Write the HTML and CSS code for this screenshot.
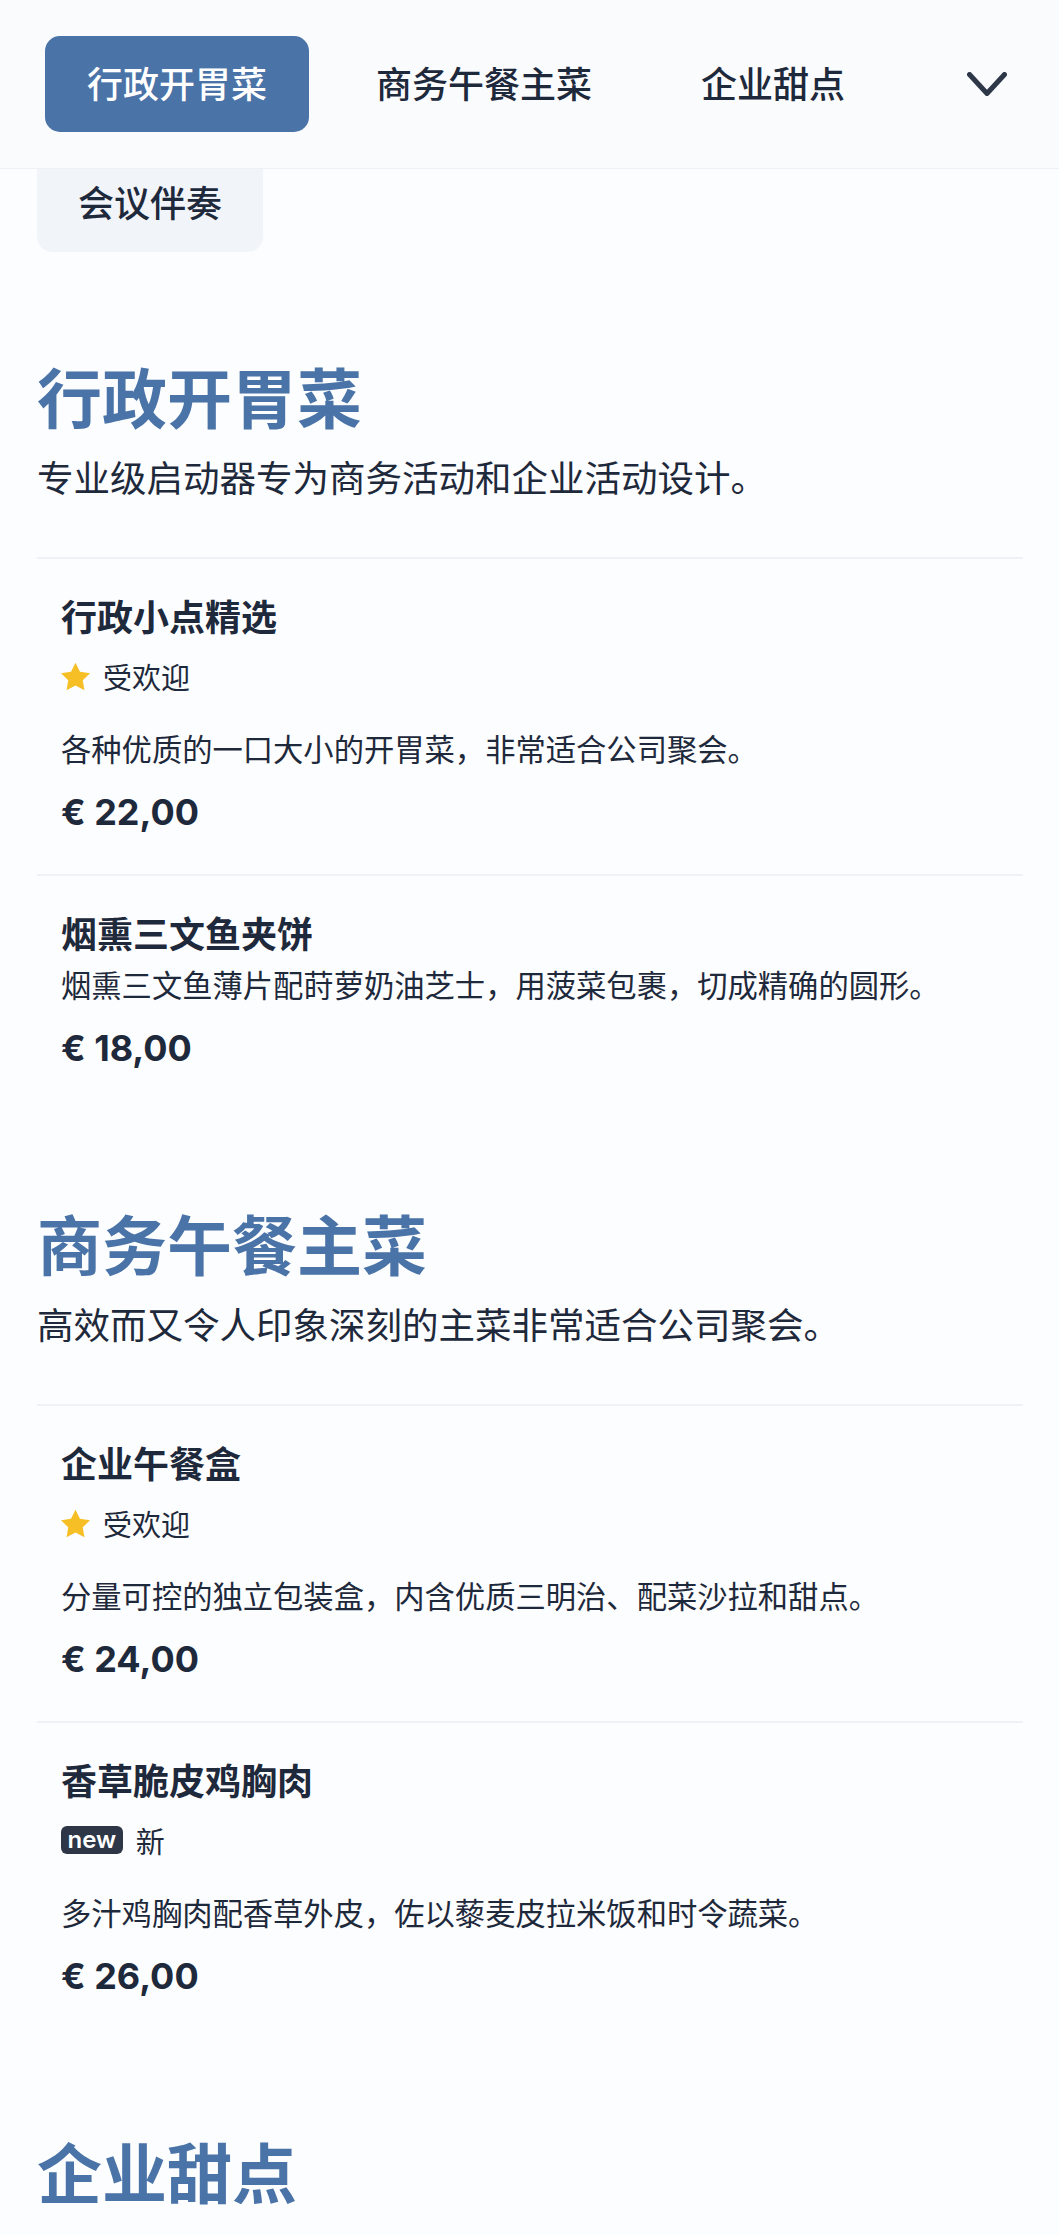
FILE: index.html
```html
<!DOCTYPE html>
<html lang="zh-CN">
<head>
    <meta charset="utf-8">
    <title>企业餐饮菜单</title>
    <link rel="stylesheet" href="styles.css">
</head>
<body>
    <header class="topbar">
        <nav class="tabs">
            <a class="tab active" href="#starters">行政开胃菜</a>
            <a class="tab" href="#mains">商务午餐主菜</a>
            <a class="tab" href="#desserts">企业甜点</a>
        </nav>
        <button class="more" aria-label="更多分类">
            <svg width="40" height="24" viewBox="0 0 40 24">
                <polyline points="2.5,2.5 20,21.5 37.5,2.5" fill="none" stroke="#2d3748" stroke-width="5" stroke-linecap="round" stroke-linejoin="round"/>
            </svg>
        </button>
    </header>

    <div class="tabs-extra">
        <a class="tab-peek" href="#music">会议伴奏</a>
    </div>

    <main class="menu">
        <section class="menu-section" id="starters">
            <h2>行政开胃菜</h2>
            <p class="section-desc">专业级启动器专为商务活动和企业活动设计。</p>
            <ul class="items">
                <li class="item">
                    <h3 class="item-name">行政小点精选</h3>
                    <div class="item-tag">
                        <svg class="star" width="29" height="29" viewBox="2 1.5 20 20">
                            <path d="M12 2l3.09 6.26L22 9.27l-5 4.87 1.18 6.88L12 17.77l-6.18 3.25L7 14.14 2 9.27l6.91-1.01L12 2z" fill="#f6bf26"/>
                        </svg>
                        <span>受欢迎</span>
                    </div>
                    <p class="item-desc">各种优质的一口大小的开胃菜，非常适合公司聚会。</p>
                    <div class="price">€ 22,00</div>
                </li>
                <li class="item">
                    <h3 class="item-name">烟熏三文鱼夹饼</h3>
                    <p class="item-desc">烟熏三文鱼薄片配莳萝奶油芝士，用菠菜包裹，切成精确的圆形。</p>
                    <div class="price">€ 18,00</div>
                </li>
            </ul>
        </section>

        <section class="menu-section" id="mains">
            <h2>商务午餐主菜</h2>
            <p class="section-desc">高效而又令人印象深刻的主菜非常适合公司聚会。</p>
            <ul class="items">
                <li class="item">
                    <h3 class="item-name">企业午餐盒</h3>
                    <div class="item-tag">
                        <svg class="star" width="29" height="29" viewBox="2 1.5 20 20">
                            <path d="M12 2l3.09 6.26L22 9.27l-5 4.87 1.18 6.88L12 17.77l-6.18 3.25L7 14.14 2 9.27l6.91-1.01L12 2z" fill="#f6bf26"/>
                        </svg>
                        <span>受欢迎</span>
                    </div>
                    <p class="item-desc">分量可控的独立包装盒，内含优质三明治、配菜沙拉和甜点。</p>
                    <div class="price">€ 24,00</div>
                </li>
                <li class="item">
                    <h3 class="item-name">香草脆皮鸡胸肉</h3>
                    <div class="item-tag">
                        <span class="badge">new</span>
                        <span>新</span>
                    </div>
                    <p class="item-desc">多汁鸡胸肉配香草外皮，佐以藜麦皮拉米饭和时令蔬菜。</p>
                    <div class="price">€ 26,00</div>
                </li>
            </ul>
        </section>

        <section class="menu-section" id="desserts">
            <h2>企业甜点</h2>
        </section>
    </main>
</body>
</html>
```

FILE: styles.css
```css
* {
    margin: 0;
    padding: 0;
    box-sizing: border-box;
}

body {
    background: #fcfdfe;
    color: #1e293b;
    font-family: "Noto Sans CJK SC", "Inter", sans-serif;
}

a {
    text-decoration: none;
    color: inherit;
}

/* top navigation */
.topbar {
    height: 169px;
    display: flex;
    align-items: center;
    padding: 0 52px 0 45px;
    background: #f9fbfd;
    border-bottom: 1px solid #edf1f5;
}

.tabs {
    flex: 1;
    display: flex;
    gap: 25px;
}

.tab {
    display: block;
    padding: 0 42px 4px;
    line-height: 92px;
    font-size: 36px;
    font-weight: 500;
    border-radius: 15px;
    color: #1e293b;
    white-space: nowrap;
}

.tab.active {
    background: #4a73a7;
    color: #fff;
}

.more {
    width: 40px;
    height: 24px;
    border: none;
    background: none;
    cursor: pointer;
}

.more svg {
    display: block;
}

.tabs-extra {
    display: flex;
    padding-left: 37px;
}

.tab-peek {
    display: block;
    height: 83px;
    padding: 0 41px;
    line-height: 65px;
    font-size: 36px;
    font-weight: 500;
    background: #f1f5f9;
    border-radius: 0 0 15px 15px;
}

/* menu */
.menu {
    padding: 11px 36px 0 37px;
}

.menu-section {
    padding-top: 92px;
}

.menu-section h2 {
    font-size: 65px;
    line-height: 80px;
    font-weight: 700;
    color: #4a73a7;
}

.section-desc {
    margin-top: 18px;
    font-size: 36.5px;
    line-height: 48px;
}

.items {
    list-style: none;
    margin-top: 56px;
}

.item {
    border-top: 2px solid #eef2f6;
    padding: 34px 24px 40px;
}

.item-name {
    font-size: 36px;
    line-height: 44px;
    font-weight: 700;
}

.item-tag {
    display: flex;
    align-items: center;
    gap: 13px;
    height: 30px;
    margin-top: 24px;
    margin-bottom: 37px;
    font-size: 29px;
    line-height: 30px;
}

.star {
    display: block;
}

.badge {
    display: block;
    height: 28px;
    padding: 0 6.5px;
    line-height: 28px;
    border-radius: 6px;
    background: #2d3748;
    color: #fff;
    font-family: "Inter", sans-serif;
    font-size: 24px;
    font-weight: 600;
}

.item-desc {
    margin-top: 10px;
    font-size: 30.3px;
    line-height: 40px;
}

.price {
    margin-top: 22px;
    font-family: "Inter", sans-serif;
    font-size: 36px;
    line-height: 44px;
    font-weight: 700;
}
```
